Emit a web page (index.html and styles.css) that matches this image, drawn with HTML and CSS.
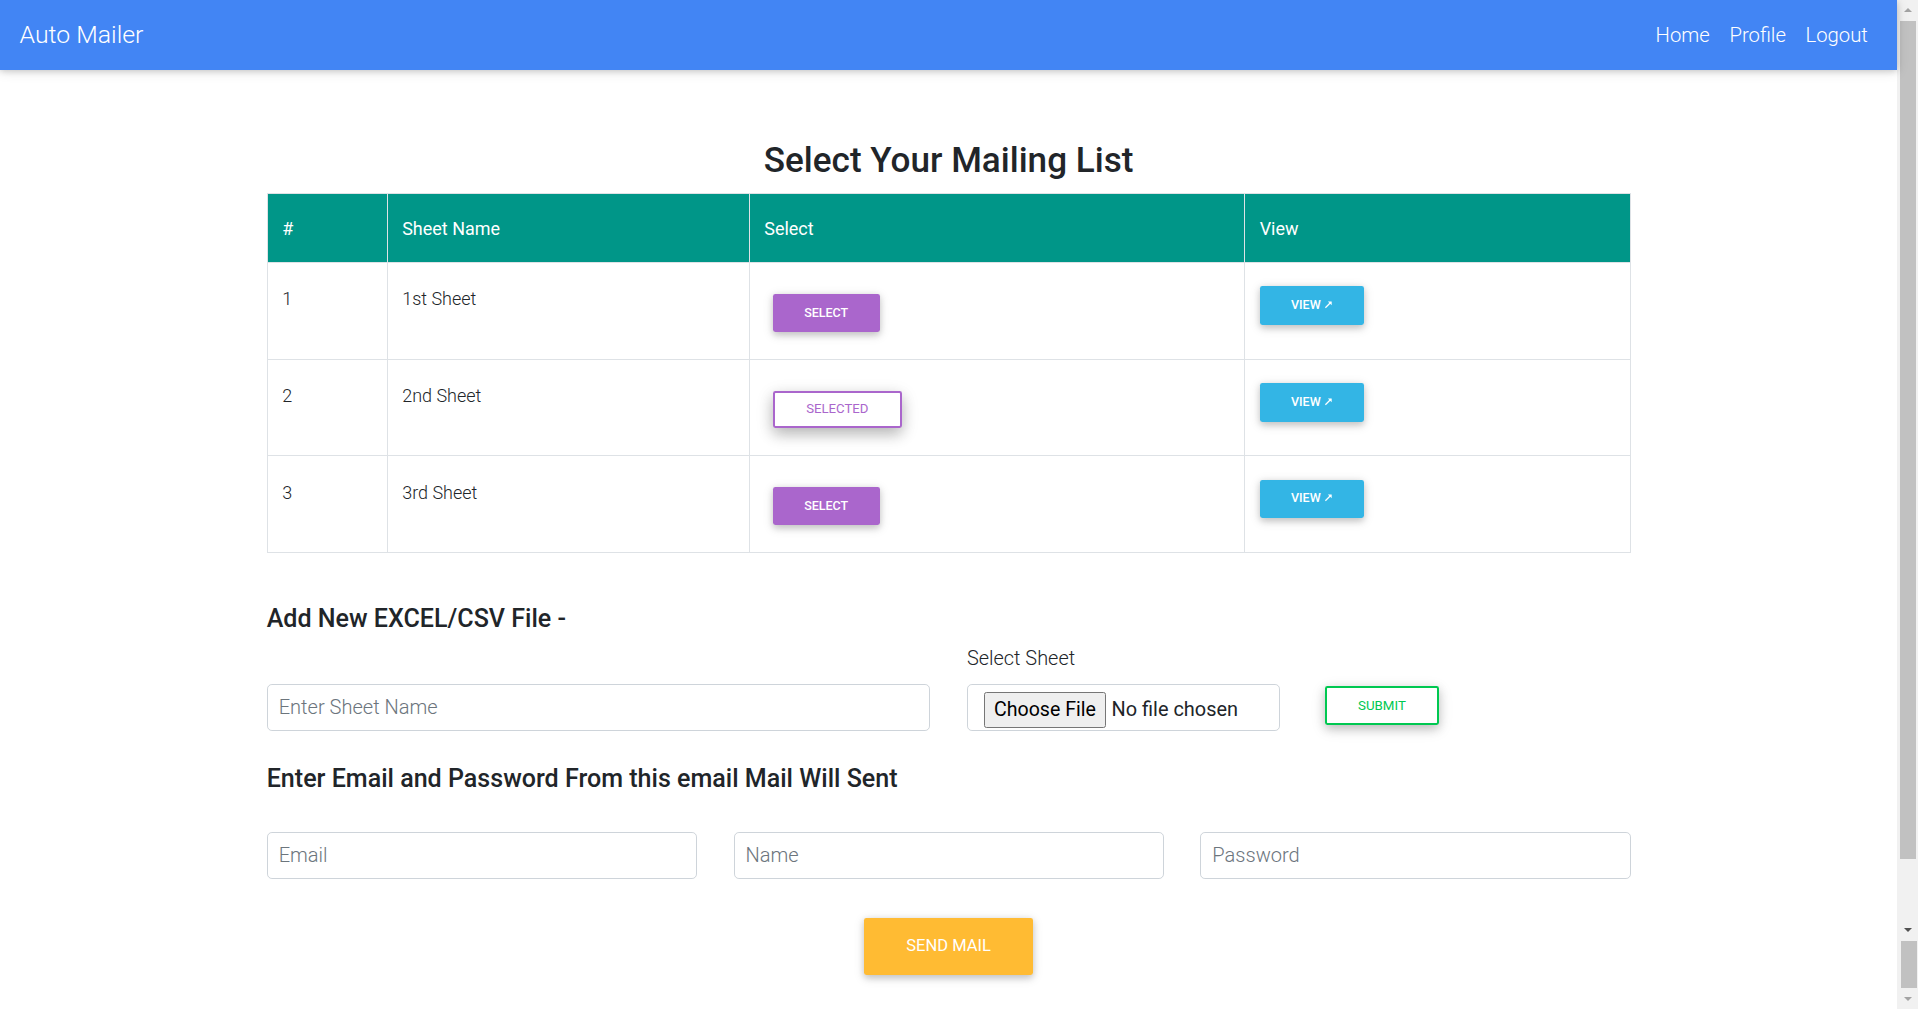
FILE: index.html
```html
<!DOCTYPE html>
<html lang="en">
<head>
<meta charset="utf-8">
<title>Auto Mailer</title>
<link rel="stylesheet" href="styles.css">
</head>
<body>
<div class="page">
  <nav class="navbar">
    <a class="brand" href="#">Auto Mailer</a>
    <ul class="nav-links">
      <li><a href="#">Home</a></li>
      <li><a href="#">Profile</a></li>
      <li><a href="#">Logout</a></li>
    </ul>
  </nav>

  <main class="container">
    <h3 class="page-title">Select Your Mailing List</h3>

    <table class="sheet-table">
      <colgroup>
        <col class="col-num">
        <col class="col-name">
        <col class="col-select">
        <col class="col-view">
      </colgroup>
      <thead>
        <tr><th>#</th><th>Sheet Name</th><th>Select</th><th>View</th></tr>
      </thead>
      <tbody>
        <tr>
          <td>1</td>
          <td>1st Sheet</td>
          <td><button class="btn btn-sm btn-select">Select</button></td>
          <td><a class="btn btn-sm btn-view" href="#">View <svg class="ext" viewBox="0 0 8 8" aria-hidden="true"><path d="M1.2 6.8 L6 2" /><path class="head" d="M3.4 1.3 H6.7 V4.6 Z" /></svg></a></td>
        </tr>
        <tr>
          <td>2</td>
          <td>2nd Sheet</td>
          <td><button class="btn btn-sm btn-selected">Selected</button></td>
          <td><a class="btn btn-sm btn-view" href="#">View <svg class="ext" viewBox="0 0 8 8" aria-hidden="true"><path d="M1.2 6.8 L6 2" /><path class="head" d="M3.4 1.3 H6.7 V4.6 Z" /></svg></a></td>
        </tr>
        <tr>
          <td>3</td>
          <td>3rd Sheet</td>
          <td><button class="btn btn-sm btn-select">Select</button></td>
          <td><a class="btn btn-sm btn-view" href="#">View <svg class="ext" viewBox="0 0 8 8" aria-hidden="true"><path d="M1.2 6.8 L6 2" /><path class="head" d="M3.4 1.3 H6.7 V4.6 Z" /></svg></a></td>
        </tr>
      </tbody>
    </table>

    <h5 class="section-title first">Add New EXCEL/CSV File -</h5>
    <div class="upload-row">
      <div class="field">
        <input class="form-control" type="text" placeholder="Enter Sheet Name">
      </div>
      <div class="field">
        <label class="field-label">Select Sheet</label>
        <div class="form-control file-box">
          <span class="file-btn">Choose File</span>
          <span class="file-name">No file chosen</span>
        </div>
      </div>
      <div class="field">
        <button class="btn btn-sm btn-submit">Submit</button>
      </div>
    </div>

    <h5 class="section-title second">Enter Email and Password From this email Mail Will Sent</h5>
    <div class="email-row">
      <input class="form-control" type="email" placeholder="Email">
      <input class="form-control" type="text" placeholder="Name">
      <input class="form-control" type="password" placeholder="Password">
    </div>

    <div class="send-row">
      <button class="btn btn-send">Send Mail</button>
    </div>
  </main>
</div>

<aside class="scrollbar" aria-hidden="true">
  <div class="sb-btn"><span class="arrow-up"></span></div>
  <div class="sb-track"><div class="sb-thumb"></div></div>
  <div class="sb-btn"><span class="arrow-down dark"></span></div>
  <div class="sb-track lower"><div class="sb-thumb small"></div></div>
  <div class="sb-btn"><span class="arrow-down"></span></div>
</aside>
</body>
</html>
```

FILE: styles.css
```css
html {
  zoom: 1.2232;
}

body {
  margin: 0;
  display: flex;
  align-items: flex-start;
  font-family: Roboto, "Noto Sans", "Liberation Sans", sans-serif;
  font-weight: 300;
  font-size: 16px;
  line-height: 1.5;
  color: #212529;
  background: #fff;
}

.page {
  flex: 1;
  min-width: 0;
}

/* ---------- fake window scrollbar ---------- */
.scrollbar {
  flex: 0 0 17px;
  height: 825px;
  display: flex;
  flex-direction: column;
  background: #f1f1f1;
}
.sb-btn {
  flex: 0 0 17px;
  display: flex;
  align-items: center;
  justify-content: center;
}
.sb-track {
  flex: 1;
  padding: 0 2px;
}
.sb-track.lower {
  flex: 0 0 39px;
  padding: 0 1px 0 3px;
}
.sb-thumb {
  height: 685px;
  background: #c1c1c1;
}
.sb-thumb.small {
  height: 39px;
}
.arrow-up {
  width: 0;
  height: 0;
  border-left: 4px solid transparent;
  border-right: 4px solid transparent;
  border-bottom: 4px solid #a3a3a3;
}
.arrow-down {
  width: 0;
  height: 0;
  border-left: 4px solid transparent;
  border-right: 4px solid transparent;
  border-top: 4px solid #a3a3a3;
}
.arrow-down.dark {
  border-top-color: #505050;
}

/* ---------- navbar ---------- */
.navbar {
  position: relative;
  z-index: 2;
  display: flex;
  align-items: center;
  justify-content: space-between;
  height: 57px;
  padding: 1.4px 16px 0;
  box-sizing: border-box;
  background: #4285f4;
  box-shadow: 0 2px 5px 0 rgba(0, 0, 0, .16), 0 2px 10px 0 rgba(0, 0, 0, .12);
}
.brand {
  color: #fff;
  font-size: 20.3px;
  line-height: 30px;
  font-weight: 300;
  text-decoration: none;
}
.nav-links {
  display: flex;
  list-style: none;
  margin: 0;
  padding: 0;
}
.nav-links a {
  display: block;
  padding: 0 8px;
  color: #fff;
  font-size: 16.6px;
  line-height: 24px;
  font-weight: 300;
  text-decoration: none;
}

/* ---------- page ---------- */
.container {
  width: 1115px;
  margin: 0 auto;
  padding: 57.5px 0 144px;
}
.page-title {
  margin: 0 0 9.5px;
  font-size: 28.7px;
  font-weight: 500;
  line-height: 33.6px;
  text-align: center;
  color: #212529;
}

/* ---------- table ---------- */
.sheet-table {
  width: 100%;
  table-layout: fixed;
  border-collapse: collapse;
  border: 1px solid #dee2e6;
}
.col-num { width: 98px; }
.col-name { width: 296px; }
.col-select { width: 405px; }
.sheet-table th {
  background: #009688;
  color: #fff;
  font-size: 14.7px;
  font-weight: 400;
  text-align: left;
  padding: 16.3px 12px 15.7px;
  line-height: 24px;
  border: 1px solid #dee2e6;
}
.sheet-table td {
  padding: 17.3px 12px 16.1px;
  font-size: 14.7px;
  line-height: 24px;
  vertical-align: top;
  border: 1px solid #dee2e6;
}

/* ---------- buttons ---------- */
.btn {
  display: inline-block;
  box-sizing: border-box;
  border: 0;
  border-radius: 2px;
  font-family: Roboto, "Noto Sans", "Liberation Sans", sans-serif;
  font-weight: 400;
  line-height: 1.5;
  text-transform: uppercase;
  text-decoration: none;
  text-align: center;
  white-space: nowrap;
  vertical-align: top;
  color: #fff;
  cursor: pointer;
  box-shadow: 0 2px 5px 0 rgba(0, 0, 0, .16), 0 2px 10px 0 rgba(0, 0, 0, .12);
}
.btn-sm {
  font-size: 10.24px;
  line-height: 15.36px;
  padding: 8px 25.6px;
}
.btn-select {
  margin: 7.7px 6px 6px 7px;
  font-weight: 500;
  background: #aa66cc;
}
.btn-selected {
  margin: 7.7px 6px 6px 7px;
  padding: 6.08px 25.6px;
  font-size: 10.8px;
  background: #fff;
  color: #aa66cc;
  border: 2px solid #aa66cc;
  box-shadow: 0 5px 11px 0 rgba(0, 0, 0, .18), 0 4px 15px 0 rgba(0, 0, 0, .15);
}
.btn-view {
  margin-top: 1.7px;
  font-weight: 500;
  background: #33b5e5;
}
.ext {
  width: 7.5px;
  height: 7.5px;
  vertical-align: 0;
  fill: none;
  stroke: #fff;
  stroke-width: 1.1;
}
.ext .head {
  fill: #fff;
  stroke: none;
}
.btn-submit {
  margin: 0 0 4.8px 6.5px;
  padding: 6.08px 25.6px;
  font-size: 10.9px;
  line-height: 16.3px;
  background: #fff;
  color: #00c851;
  border: 2px solid #00c851;
  box-shadow: 0 3px 8px 0 rgba(0, 0, 0, .17), 0 3px 12px 0 rgba(0, 0, 0, .13);
}
.btn-send {
  margin: 6px;
  padding: 13.44px 34.24px;
  font-size: 13.5px;
  line-height: 19.44px;
  background: #ffbb33;
}

/* ---------- forms ---------- */
.section-title {
  font-size: 20.5px;
  font-weight: 500;
  line-height: 24px;
  color: #212529;
}
.section-title.first {
  margin: 41.8px 0 8.7px;
}
.section-title.second {
  margin: 26.8px 0 31.6px;
}
.upload-row {
  display: grid;
  grid-template-columns: 542.5px 256px 1fr;
  column-gap: 30px;
  align-items: end;
}
.field-label {
  display: block;
  margin-bottom: 8px;
  font-size: 16.3px;
  line-height: 24px;
}
.form-control {
  display: block;
  width: 100%;
  height: 38.6px;
  box-sizing: border-box;
  padding: 6px 9px;
  font-family: Roboto, "Noto Sans", "Liberation Sans", sans-serif;
  font-size: 16.4px;
  font-weight: 300;
  line-height: 24.6px;
  color: #495057;
  background: #fff;
  border: 1px solid #ced4da;
  border-radius: 4px;
}
.form-control::placeholder {
  color: #6c757d;
  opacity: 1;
}
.file-box {
  display: flex;
  align-items: flex-start;
  padding: 6.3px 12px 0 13px;
  overflow: hidden;
  white-space: nowrap;
}
.file-btn {
  box-sizing: border-box;
  height: 29.6px;
  padding: 0 7.5px;
  font-size: 16px;
  line-height: 27.6px;
  font-weight: 400;
  color: #000;
  background: #efefef;
  border: 1px solid #767676;
  border-radius: 2px;
}
.file-name {
  margin-left: 4.5px;
  font-size: 16.3px;
  line-height: 29.6px;
  font-weight: 400;
  color: #212529;
}
.email-row {
  display: grid;
  grid-template-columns: repeat(3, 1fr);
  column-gap: 30px;
}
.send-row {
  margin-top: 26px;
  text-align: center;
}
```
